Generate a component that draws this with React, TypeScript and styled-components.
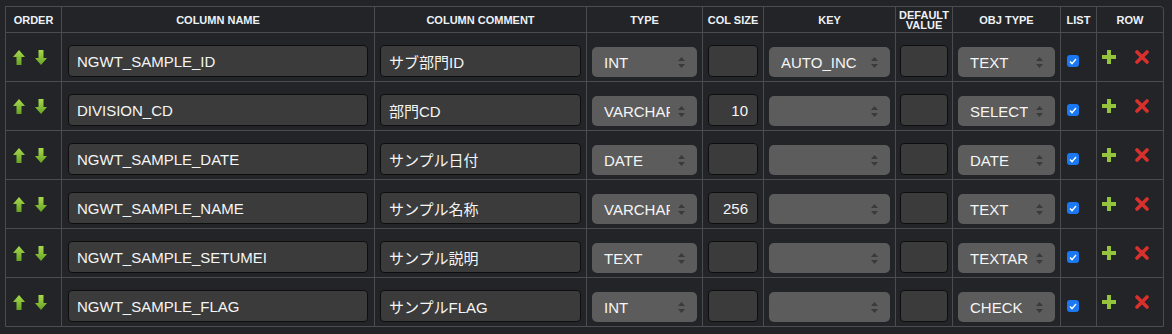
import React from 'react';
import styled, { createGlobalStyle } from 'styled-components';

const GlobalStyle = createGlobalStyle`
  body {
    margin: 0;
    background: #222428;
    font-family: 'Liberation Sans', Arial, 'Noto Sans CJK JP', sans-serif;
    color: #f2f2f2;
  }
`;

const Wrapper = styled.div`
  padding: 6px 0 0 5px;
`;

const Grid = styled.div`
  display: grid;
  grid-template-columns: 55px 312px 211px 115px 60px 131px 56px 107px 35px 66px;
  gap: 1px;
  width: fit-content;
  background: #4a4c50;
  border: 1px solid #4a4c50;
  border-top-right-radius: 4px;
  overflow: hidden;
`;

const HeaderCell = styled.div`
  background: #222428;
  height: 25px;
  display: flex;
  align-items: center;
  justify-content: center;
  text-align: center;
  font-size: 11px;
  font-weight: 700;
  line-height: 10px;
  color: #eef2f7;
  text-transform: uppercase;
`;

const Cell = styled.div<{ $bottom?: boolean; $pad?: number }>`
  background: #222428;
  height: 48px;
  box-sizing: border-box;
  display: flex;
  align-items: ${(props) => (props.$bottom ? 'flex-end' : 'center')};
  padding: 0 ${(props) => (props.$pad !== undefined ? props.$pad : 5)}px
    ${(props) => (props.$bottom ? 4 : 0)}px;
`;

const OrderCell = styled(Cell)`
  padding-left: 7px;
  gap: 10px;
`;

const RowCell = styled(Cell)`
  padding-left: 5px;
  gap: 19px;
`;

const TextInput = styled.input<{ $right?: boolean }>`
  width: 100%;
  height: 32px;
  box-sizing: border-box;
  background: #3b3b3b;
  border: 1px solid #0e0e0e;
  border-radius: 4px;
  padding: 0 ${(props) => (props.$right ? 9 : 8)}px;
  color: #f5f5f5;
  font-family: inherit;
  font-size: 15px;
  text-align: ${(props) => (props.$right ? 'right' : 'left')};
  outline: none;
`;

const SelectWrap = styled.div`
  position: relative;
  width: 100%;
  height: 30px;
`;

const Select = styled.select`
  appearance: none;
  width: 100%;
  height: 30px;
  box-sizing: border-box;
  background: #5c5c5c;
  border: none;
  border-radius: 5px;
  padding: 0 27px 0 12px;
  color: #f5f5f5;
  font-family: inherit;
  font-size: 15px;
  outline: none;
`;

const SelectArrows = styled.svg`
  position: absolute;
  right: 12px;
  top: 10px;
  pointer-events: none;
`;

const CheckBox = styled.span`
  display: inline-flex;
  align-items: center;
  justify-content: center;
  width: 12px;
  height: 12px;
  margin: 8px 0 0 1px;
  border-radius: 3px;
  background: #1a78f2;
`;

const IconButton = styled.button`
  display: flex;
  padding: 0;
  border: none;
  background: none;
  cursor: pointer;
`;

const UpArrow = () => (
  <IconButton aria-label="up">
    <svg width="12" height="15" viewBox="0 0 12 15">
      <defs>
        <linearGradient id="gUp" x1="0" y1="0" x2="0" y2="1">
          <stop offset="0" stopColor="#a9da4e" />
          <stop offset="1" stopColor="#66a322" />
        </linearGradient>
      </defs>
      <path d="M6 0 L12 7 L8.5 7 L8.5 15 L3.5 15 L3.5 7 L0 7 Z" fill="url(#gUp)" />
    </svg>
  </IconButton>
);

const DownArrow = () => (
  <IconButton aria-label="down">
    <svg width="12" height="15" viewBox="0 0 12 15">
      <defs>
        <linearGradient id="gDown" x1="0" y1="0" x2="0" y2="1">
          <stop offset="0" stopColor="#a9da4e" />
          <stop offset="1" stopColor="#66a322" />
        </linearGradient>
      </defs>
      <path d="M3.5 0 L8.5 0 L8.5 8 L12 8 L6 15 L0 8 L3.5 8 Z" fill="url(#gDown)" />
    </svg>
  </IconButton>
);

const PlusIcon = () => (
  <IconButton aria-label="add row">
    <svg width="14" height="14" viewBox="0 0 14 14">
      <path d="M5 0 H9 V5 H14 V9 H9 V14 H5 V9 H0 V5 H5 Z" fill="#95c43c" />
    </svg>
  </IconButton>
);

const CrossIcon = () => (
  <IconButton aria-label="delete row">
    <svg width="14" height="14" viewBox="0 0 14 14">
      <path d="M2 2 L12 12 M12 2 L2 12" stroke="#d8302c" strokeWidth="3.6" strokeLinecap="round" />
    </svg>
  </IconButton>
);

const Dropdown = ({ value, options }: { value: string; options: string[] }) => (
  <SelectWrap>
    <Select defaultValue={value}>
      {options.map((o) => (
        <option key={o} value={o}>
          {o}
        </option>
      ))}
    </Select>
    <SelectArrows width="7" height="11" viewBox="0 0 7 11">
      <path d="M3.5 0 L7 4 L0 4 Z M0 7 L7 7 L3.5 11 Z" fill="#3a3a3a" />
    </SelectArrows>
  </SelectWrap>
);

const TYPES = ['INT', 'VARCHAR', 'DATE', 'TEXT'];
const KEYS = ['', 'AUTO_INC', 'PRIMARY'];
const OBJ_TYPES = ['TEXT', 'SELECT', 'DATE', 'TEXTAREA', 'CHECK'];

const rows = [
  { name: 'NGWT_SAMPLE_ID', comment: 'サブ部門ID', type: 'INT', size: '', key: 'AUTO_INC', obj: 'TEXT' },
  { name: 'DIVISION_CD', comment: '部門CD', type: 'VARCHAR', size: '10', key: '', obj: 'SELECT' },
  { name: 'NGWT_SAMPLE_DATE', comment: 'サンプル日付', type: 'DATE', size: '', key: '', obj: 'DATE' },
  { name: 'NGWT_SAMPLE_NAME', comment: 'サンプル名称', type: 'VARCHAR', size: '256', key: '', obj: 'TEXT' },
  { name: 'NGWT_SAMPLE_SETUMEI', comment: 'サンプル説明', type: 'TEXT', size: '', key: '', obj: 'TEXTAREA' },
  { name: 'NGWT_SAMPLE_FLAG', comment: 'サンプルFLAG', type: 'INT', size: '', key: '', obj: 'CHECK' }
];

const headers = [
  'Order',
  'Column Name',
  'Column Comment',
  'Type',
  'Col Size',
  'Key',
  'Default Value',
  'Obj Type',
  'List',
  'Row'
];

const App = () => (
  <Wrapper>
    <GlobalStyle />
    <Grid>
      {headers.map((h) => (
        <HeaderCell key={h}>
          {h === 'Default Value' ? (
            <span>
              Default
              <br />
              Value
            </span>
          ) : (
            h
          )}
        </HeaderCell>
      ))}
      {rows.map((r) => (
        <React.Fragment key={r.name}>
          <OrderCell>
            <UpArrow />
            <DownArrow />
          </OrderCell>
          <Cell $bottom $pad={6}>
            <TextInput defaultValue={r.name} />
          </Cell>
          <Cell $bottom>
            <TextInput defaultValue={r.comment} />
          </Cell>
          <Cell $bottom>
            <Dropdown value={r.type} options={TYPES} />
          </Cell>
          <Cell $bottom>
            <TextInput $right defaultValue={r.size} />
          </Cell>
          <Cell $bottom>
            <Dropdown value={r.key} options={KEYS} />
          </Cell>
          <Cell $bottom $pad={4}>
            <TextInput defaultValue="" />
          </Cell>
          <Cell $bottom>
            <Dropdown value={r.obj} options={OBJ_TYPES} />
          </Cell>
          <Cell $pad={5}>
            <CheckBox>
              <svg width="8" height="7" viewBox="0 0 8 7">
                <path d="M1 3.6 L3 5.6 L7 1" stroke="#fff" strokeWidth="1.4" fill="none" />
              </svg>
            </CheckBox>
          </Cell>
          <RowCell>
            <PlusIcon />
            <CrossIcon />
          </RowCell>
        </React.Fragment>
      ))}
    </Grid>
  </Wrapper>
);

export default App;
